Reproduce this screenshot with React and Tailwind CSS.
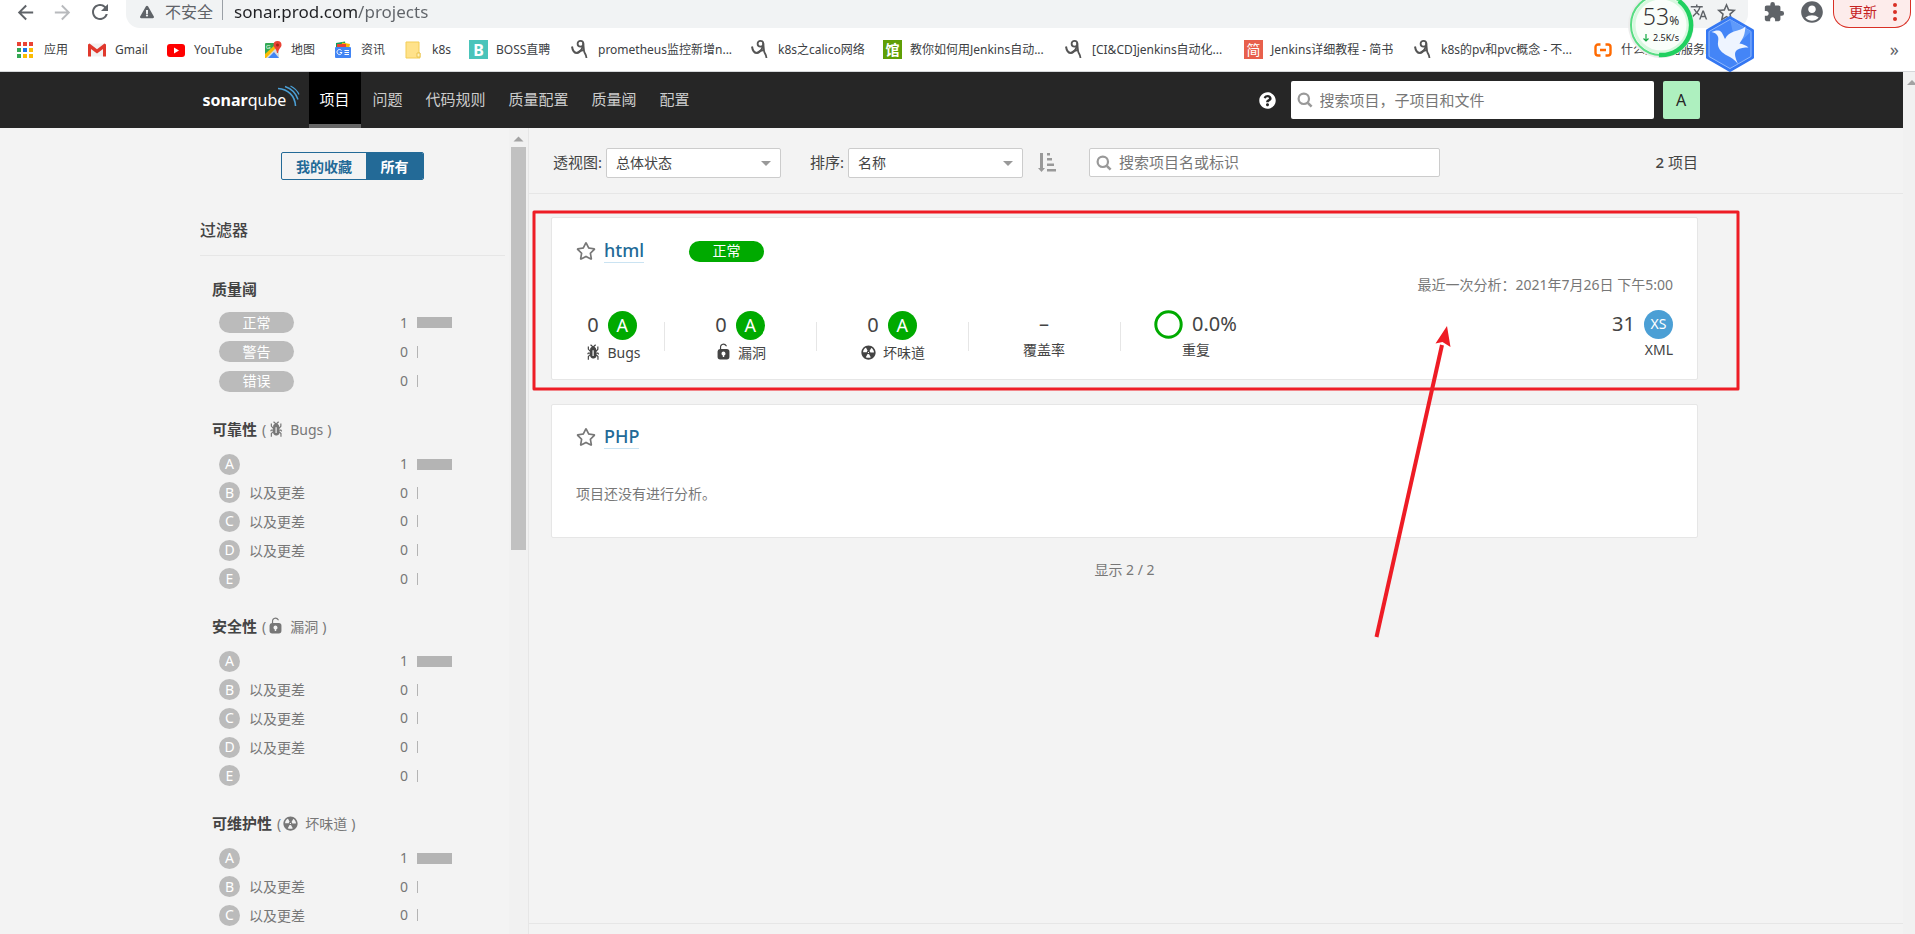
import React from "react";
import { FaRegStar, FaQuestionCircle, FaExclamationTriangle } from "react-icons/fa";
import { MdExtension, MdAccountCircle, MdRefresh, MdArrowBack, MdArrowForward, MdStarBorder, MdTranslate } from "react-icons/md";

const BUG =
  "M11 9h1.3l.5.8.8-.5-.8-1.3H11v-.3l2-2.3V3h-1v2l-1 1.2V5c-.1-.8-.7-1.5-1.4-1.9L11 1.8l-.7-.7-1.8 1.6-1.8-1.6-.7.7 1.5 1.3C6.7 3.5 6.1 4.2 6 5v1.1L5 5V3H4v2.3l2 2.3V8H4.2l-.7 1.2.8.5.4-.7H6v.3l-2 1.9V14h1v-2.4l1-1C6 12 7.1 13 8.4 13h.8c.7 0 1.4-.3 1.8-.9.3-.4.3-.9.2-1.4l.9.9V14h1v-2.8l-2-1.9V9zm-2 2H8V6h1v5z";
const LOCK =
  "M10.8 5H6V3.9a2.28 2.28 0 0 1 2-2.5 2.22 2.22 0 0 1 1.8 1.2.48.48 0 0 0 .7.2.48.48 0 0 0 .2-.7A3 3 0 0 0 8 .4a3.34 3.34 0 0 0-3 3.5v1.2a2.16 2.16 0 0 0-2 2.1v4.4a2.22 2.22 0 0 0 2.2 2.2h5.6a2.22 2.22 0 0 0 2.2-2.2V7.2A2.22 2.22 0 0 0 10.8 5zm-2.2 5.5v1.2H7.4v-1.2a1.66 1.66 0 0 1-1.1-1.6A1.75 1.75 0 0 1 8 7.2a1.71 1.71 0 0 1 .6 3.3z";
const SMELL =
  "M8 2C4.7 2 2 4.7 2 8s2.7 6 6 6 6-2.7 6-6-2.7-6-6-6zm-.5 5.5h.9v.9h-.9v-.9zm-3.8.2c-.1 0-.2-.1-.2-.2 0-.4.1-1.2.6-2S5.3 4.2 5.6 4c.2 0 .3 0 .3.1l1.3 2.3c0 .1 0 .2-.1.2-.1.2-.2.3-.3.5-.1.2-.2.4-.2.5 0 .1-.1.2-.2.2l-2.7-.1zM9.9 12c-.3.2-1.1.5-2 .5-.9 0-1.7-.3-2-.5-.1 0-.1-.2-.1-.3l1.3-2.3c0-.1.1-.1.2-.1.2.1.3.1.5.1s.4 0 .5-.1c.1 0 .2 0 .2.1l1.3 2.3c.2.2.2.3.1.3zm2.5-4.1L9.7 8c-.1 0-.2-.1-.2-.2 0-.2-.1-.4-.2-.5 0-.1-.2-.3-.3-.4-.1 0-.1-.1-.1-.2l1.3-2.3c.1-.1.2-.1.3-.1.3.2 1 .7 1.5 1.5s.6 1.6.6 2c0 0-.1.1-.2.1z";

function Glyph({ d }) {
  return (
    <svg className="size-[19px] shrink-0" viewBox="0 0 16 16" fill="currentColor" aria-hidden="true">
      <path d={d} />
    </svg>
  );
}

function SearchIcon() {
  return (
    <svg className="size-4 shrink-0 text-[#999999]" viewBox="0 0 16 16" fill="none" stroke="currentColor" aria-hidden="true">
      <circle cx="6.8" cy="6.8" r="5.2" strokeWidth="2.2" />
      <path d="M10.8 10.8L14.6 14.6" strokeWidth="2.6" />
    </svg>
  );
}

/* ---------- bookmark favicons ---------- */

function AppsIcon() {
  const colors = ["#ea4335", "#ea4335", "#ea4335", "#34a853", "#1a73e8", "#fbbc04", "#34a853", "#fbbc04", "#fbbc04"];
  return (
    <svg className="size-4" viewBox="0 0 16 16" aria-hidden="true">
      {colors.map((c, i) => (
        <rect key={i} x={(i % 3) * 6} y={Math.floor(i / 3) * 6} width="4" height="4" fill={c} />
      ))}
    </svg>
  );
}
function GmailIcon() {
  return (
    <svg className="h-4 w-[18px]" viewBox="0 0 18 16" aria-hidden="true">
      <path d="M1 1.500h16v13H1z" fill="#f2f2f2" />
      <path d="M0 14.500V2.500l1.500-1L9 7.300l7.500-5.800 1.500 1v12h-3V7L9 11.600 3 7v7.500z" fill="#e0392d" />
    </svg>
  );
}
function YoutubeIcon() {
  return (
    <svg className="h-4 w-[18px]" viewBox="0 0 18 16" aria-hidden="true">
      <rect x="0" y="2" width="18" height="13" rx="3" fill="#f00" />
      <path d="M7 5.600L12 8.500 7 11.400z" fill="#fff" />
    </svg>
  );
}
function MapsIcon() {
  return (
    <svg className="h-[18px] w-[18px]" viewBox="0 0 18 18" aria-hidden="true">
      <rect x="1" y="2" width="14" height="15" rx="1" fill="#34a853" />
      <path d="M1 17L12 5l3 3v9z" fill="#d9dde0" />
      <path d="M4 17l6-6 5 6z" fill="#4285f4" />
      <path d="M1 13l10-9 2 2L2 17H1z" fill="#fbbc04" />
      <path d="M13.500 0a4 4 0 0 1 4 4c0 2.500-3 3.800-3.500 8h-1c-.5-4.200-3.500-5.500-3.500-8a4 4 0 0 1 4-4z" fill="#ea4335" />
      <circle cx="13.500" cy="4" r="1.500" fill="#a52714" />
      <text x="2" y="8" fontSize="6" fill="#fff" fontFamily="Liberation Sans, sans-serif">G</text>
    </svg>
  );
}
function NewsIcon() {
  return (
    <svg className="h-[18px] w-[18px]" viewBox="0 0 18 18" aria-hidden="true">
      <path d="M2 2l9-1.500 1 6H2z" fill="#0f9d58" />
      <path d="M8 1.500l8 1.500-1 5H7z" fill="#fbbc04" />
      <path d="M3 3h9v4H3z" fill="#ea4335" />
      <rect x="1" y="6" width="16" height="11" rx="1" fill="#4285f4" />
      <path d="M7.500 9.500a2.500 2.500 0 1 0 .5 2H5.800M10.500 9.500h4.500M10.500 11.500h4.500M10.500 13.500h4.500" stroke="#fff" fill="none" />
    </svg>
  );
}
function FolderIcon() {
  return (
    <svg className="h-[18px] w-4" viewBox="0 0 16 18" aria-hidden="true">
      <path d="M1 1h13v11h1v5H1z" fill="#ffe28a" stroke="#f3cd57" />
      <path d="M12 12h3v4h-3z" fill="#fff2bf" stroke="#e6bd3f" strokeWidth=".8" />
    </svg>
  );
}
function BossIcon() {
  return (
    <span className="flex h-[19px] w-[19px] items-center justify-center bg-[#4ac4ba] text-[16px] leading-none font-bold text-white">B</span>
  );
}
function BlogIcon() {
  return (
    <svg className="h-[19px] w-[18px]" viewBox="0 0 18 19" fill="none" stroke="#555" aria-hidden="true">
      <path d="M1 6.500C1.500 10 3 13 6 13c2.500 0 4.500-3 6-7" strokeWidth="2" />
      <circle cx="9.500" cy="3.800" r="2.900" strokeWidth="1.800" />
      <path d="M12 2.500c1 4 .5 8 1.500 10 .8 1.500 1.700 2.500 2 5.500M13 10c-2.500 0-4.500.8-7 3" strokeWidth="1.800" />
    </svg>
  );
}
function GuanIcon() {
  return <span className="flex h-[19px] w-[19px] items-center justify-center bg-[#5f9f06] text-[14px] leading-none font-bold text-white">馆</span>;
}
function JianIcon() {
  return <span className="flex h-[19px] w-[19px] items-center justify-center bg-[#e8604c] text-[14px] leading-none text-white">简</span>;
}
function CloudIcon() {
  return (
    <svg className="h-[14px] w-[18px]" viewBox="0 0 18 14" fill="none" stroke="#ff6a00" strokeWidth="2.400" aria-hidden="true">
      <path d="M6.500 1.500H4a2.500 2.500 0 0 0-2.500 2.500v6A2.500 2.500 0 0 0 4 12.500h2.500M11.500 1.500H14A2.500 2.500 0 0 1 16.500 4v6a2.500 2.500 0 0 1-2.500 2.500h-2.500M6 7h6" />
    </svg>
  );
}

const bookmarks = [
  { icon: AppsIcon, label: "应用", w: "w-[71px]" },
  { icon: GmailIcon, label: "Gmail", w: "w-[79px]" },
  { icon: YoutubeIcon, label: "YouTube", w: "w-[97px]" },
  { icon: MapsIcon, label: "地图", w: "w-[70px]" },
  { icon: NewsIcon, label: "资讯", w: "w-[71px]" },
  { icon: FolderIcon, label: "k8s", w: "w-[64px]" },
  { icon: BossIcon, label: "BOSS直聘", w: "w-[102px]" },
  { icon: BlogIcon, label: "prometheus监控新增n...", w: "w-[180px]" },
  { icon: BlogIcon, label: "k8s之calico网络", w: "w-[132px]" },
  { icon: GuanIcon, label: "教你如何用Jenkins自动...", w: "w-[182px]" },
  { icon: BlogIcon, label: "[CI&CD]jenkins自动化...", w: "w-[179px]" },
  { icon: JianIcon, label: "Jenkins详细教程 - 简书", w: "w-[170px]" },
  { icon: BlogIcon, label: "k8s的pv和pvc概念 - 不...", w: "w-[180px]" },
  { icon: CloudIcon, label: "什么是容器服务k8s", w: "w-[130px]" },
];

function BrowserBar() {
  return (
    <div className="relative shrink-0 border-b border-[#d5d7da] bg-white">
      <div className="flex h-7 items-start overflow-hidden text-[#5f6368]">
        <div className="flex w-[126px] shrink-0 gap-[14px] pl-[14px]">
          <button aria-label="后退" className="h-6"><MdArrowBack size={23} /></button>
          <button aria-label="前进" className="h-6 text-[#b8babd]"><MdArrowForward size={23} /></button>
          <button aria-label="刷新" className="h-6"><MdRefresh size={24} /></button>
        </div>
        <div className="flex h-7 min-w-0 flex-1 items-start rounded-b-[14px] bg-[#f1f3f4] pr-[10px] pl-[14px]">
          <span className="flex h-6 shrink-0 items-center gap-[11px] text-[16px]">
            <FaExclamationTriangle size={14} />
            不安全
          </span>
          <span className="mr-[11px] ml-[9px] h-5 w-px shrink-0 bg-[#9aa0a6]" />
          <input
            aria-label="地址"
            className="h-6 min-w-0 flex-1 bg-[linear-gradient(to_right,#202124_124px,#5f6368_124px)] bg-clip-text text-[17px] text-transparent outline-none"
            defaultValue="sonar.prod.com/projects"
          />
          <button aria-label="翻译" className="flex h-6 w-8 items-center justify-center"><MdTranslate size={18} /></button>
          <button aria-label="收藏" className="flex h-6 items-center"><MdStarBorder size={23} /></button>
        </div>
        <div className="flex h-6 shrink-0 items-center gap-[14px] pr-[8px] pl-[15px]">
          <MdExtension size={22} />
          <MdAccountCircle size={26} />
        </div>
        <button className="mr-1 flex h-7 w-[78px] shrink-0 items-center justify-between rounded-b-[16px] border border-t-0 border-[#d93025] bg-[#fdeceb] pr-[13px] pb-1 pl-[15px] text-[14px] text-[#c5221f]">
          更新
          <svg className="h-5 w-1" viewBox="0 0 4 20" fill="#d93025" aria-hidden="true">
            <circle cx="2" cy="3" r="2" /><circle cx="2" cy="10" r="2" /><circle cx="2" cy="17" r="2" />
          </svg>
        </button>
      </div>
      <nav className="flex h-[43px] items-center overflow-hidden pl-[17px] text-[12px] text-[#3c4043]">
        {bookmarks.map(({ icon: Icon, label, w }) => (
          <a key={label} href="#" className={`flex shrink-0 items-center gap-[8px] whitespace-nowrap ${w}`}>
            <span className="flex w-[19px] shrink-0">
              <Icon />
            </span>
            {label}
          </a>
        ))}
        <button className="mr-4 ml-auto text-[18px] text-[#5f6368]">»</button>
      </nav>

      <div className="absolute -top-2 right-[221px] size-[66px]">
        <svg className="size-full" viewBox="0 0 66 66" aria-hidden="true">
          <circle cx="33" cy="33" r="33" fill="#ececec" />
          <circle cx="33" cy="33" r="30" fill="#fbfffb" fillOpacity=".95" stroke="#58dd83" strokeWidth="2" />
          <circle cx="33" cy="33" r="27" fill="none" stroke="#d8f8df" strokeWidth="3" />
          <path d="M51 9a30 30 0 0 1-20 54" fill="none" stroke="#20d060" strokeWidth="4.500" />
        </svg>
        <div className="absolute inset-x-0 top-[10px] flex items-baseline justify-center leading-[28px] text-[#333333]">
          <span className="text-[23px] font-light">53</span>
          <span className="text-[12px]">%</span>
        </div>
        <div className="absolute inset-x-0 top-[39px] flex items-center justify-center gap-1 text-[9px] leading-[14px] text-[#222222]">
          <svg className="h-2 w-1.5" viewBox="0 0 6 8" fill="none" stroke="#12a840" strokeWidth="1.200" aria-hidden="true">
            <path d="M3 0v7M.5 4.500L3 7l2.500-2.500" />
          </svg>
          2.5K/s
        </div>
      </div>
      <svg className="absolute top-4 right-[160px] h-14 w-[50px]" viewBox="0 0 50 56" aria-hidden="true">
        <path d="M25 1.500L47.500 14.500V41.500L25 54.500 2.500 41.500V14.500z" fill="#4485f7" stroke="#3477f2" strokeWidth="3" strokeLinejoin="round" />
        <path d="M25 3.500L46 15.500V40.500L25 52.500 4 40.500V15.500z" fill="none" stroke="#8fb8fc" />
        <path d="M25 3.500L46 15.500 31 30z" fill="#5f9afa" />
        <path d="M6.500 16C9 15 11 14.300 13.500 14.500 17 15 18 19 20 23 22 19 25 17 29 15.500 34 14 37.500 13 40.500 10.500 40 14 40 17 38.500 20.500 37.500 23 36 25 34.500 27.500 38 28 41 29.500 43.500 31.500 39 31.500 35 32 32 34 29 36.500 29.500 40 33 48 29.500 43.500 26 41.500 22 39.500 17 37 13.500 33 13 29 12.700 25 14.500 22 12 19 10.500 17 9 16.500 6.500 16z" fill="#eef4ff" />
      </svg>
    </div>
  );
}

/* ---------- application ---------- */

const menu = ["问题", "代码规则", "质量配置", "质量阈", "配置"];

function Header() {
  return (
    <header className="h-14 shrink-0 bg-[#262626]">
      <div className="mx-auto flex h-full max-w-[1500px] items-stretch pr-[2px]">
        <a href="#" aria-label="SonarQube" className="relative flex w-[107px] items-center pl-px text-[16px] text-white">
          <b>sonar</b>
          <span>qube</span>
          <svg className="absolute top-3 right-[9px] h-6 w-6" viewBox="0 0 24 24" fill="none" stroke="#4b9fd5" aria-hidden="true">
            <path d="M2 4.500C12 5 19 12 19.500 22" strokeWidth="1.600" />
            <path d="M9 2.500c6 2 11 7 13 13" strokeWidth="1.400" />
            <path d="M14.500 2c4 2 7 5 8.500 8.500" strokeWidth="1.200" />
          </svg>
        </a>
        <nav className="flex items-stretch gap-px text-[15px] text-[#cccccc]">
          <a href="#" className="flex items-center border-b-4 border-[#666666] bg-black px-[11px] pt-[2px] text-white">项目</a>
          {menu.map((m) => (
            <a key={m} href="#" className="flex items-center border-b-4 border-transparent px-[11px] pt-[2px]">{m}</a>
          ))}
        </nav>
        <div className="ml-auto flex items-center gap-[9px]">
          <button aria-label="帮助" className="mr-[6px] text-white"><FaQuestionCircle size={17} /></button>
          <label className="flex h-[38px] w-[363px] items-center gap-[7px] rounded-xs bg-white pl-[6px]">
            <SearchIcon />
            <input aria-label="搜索" className="min-w-0 flex-1 text-[15px] outline-none placeholder:text-[#777777]" placeholder="搜索项目，子项目和文件" />
          </label>
          <button className="h-[38px] w-[37px] rounded-xs bg-[#aef0bf] text-[16px] text-[#262626]">A</button>
        </div>
      </div>
    </header>
  );
}

function FacetCount({ n }) {
  return (
    <>
      <span className="ml-auto pr-[9px] leading-5">{n}</span>
      <span className="flex w-[45px]">
        {n ? <span className="h-[11px] w-[35px] bg-[#b4b4b4]" /> : <span className="h-3 w-px bg-[#b4b4b4]" />}
      </span>
    </>
  );
}

const ratings = ["A", "B", "C", "D", "E"];

function RatingFacet({ title, icon, name }) {
  return (
    <section className="mt-[21px] pl-3">
      <h3 className="flex h-6 items-center text-[14px] text-[#777777]">
        <b className="mr-[5px] text-[15px] font-semibold text-[#444444]">{title}</b>
        (<Glyph d={icon} />
        <span className="ml-[5px]">{name}</span>
        <span className="ml-1">)</span>
      </h3>
      <div className="mt-[9px] grid h-[143px] grid-rows-5">
        {ratings.map((r, i) => (
          <button key={r} className="flex items-center pl-[7px] text-left text-[14px] text-[#777777]">
            <span className="flex size-[21px] items-center justify-center rounded-full bg-[#bbbbbb] leading-none text-white">{r}</span>
            {i > 0 && i < 4 && <span className="pl-[9px]">以及更差</span>}
            <FacetCount n={i === 0 ? 1 : 0} />
            <span className="w-[43px]" />
          </button>
        ))}
      </div>
    </section>
  );
}

function Sidebar() {
  return (
    <aside className="flex w-[529px] shrink-0 overflow-hidden border-r border-[#e6e6e6]">
      <div className="min-w-0 flex-1 pr-1 pl-[200px]">
        <div className="mt-6 flex justify-center">
          <div className="flex h-7 overflow-hidden rounded-xs border border-[#236a97] text-[14px] font-bold">
            <button className="w-[84px] text-[#236a97]">我的收藏</button>
            <button className="w-[57px] bg-[#236a97] text-white">所有</button>
          </div>
        </div>
        <h2 className="mt-9 border-b border-[#e6e6e6] pb-[11px] text-[16px] leading-7 font-medium text-[#444444]">过滤器</h2>
        <section className="mt-[21px] pl-3">
          <h3 className="h-6 text-[15px] leading-6 font-semibold text-[#444444]">质量阈</h3>
          <div className="mt-[7px] grid h-[88px] grid-rows-3">
            {["正常", "警告", "错误"].map((s, i) => (
              <button key={s} className="flex items-center pl-[7px] text-[14px] text-[#777777]">
                <span className="flex h-[21px] w-[75px] items-center justify-center rounded-full bg-[#bbbbbb] leading-none text-white">{s}</span>
                <FacetCount n={i === 0 ? 1 : 0} />
                <span className="w-[43px]" />
              </button>
            ))}
          </div>
        </section>
        <RatingFacet title="可靠性" icon={BUG} name="Bugs" />
        <RatingFacet title="安全性" icon={LOCK} name="漏洞" />
        <RatingFacet title="可维护性" icon={SMELL} name="坏味道" />
      </div>
      <div className="flex w-[19px] flex-col items-center bg-[#f1f1f1]">
        <svg className="mt-1 h-[15px] w-[15px] text-[#a3a3a3]" viewBox="0 0 15 15" fill="currentColor" aria-hidden="true">
          <path d="M2.500 9.500l5-5 5 5z" />
        </svg>
        <div className="h-1/2 w-[15px] bg-[#c1c1c1]" />
      </div>
    </aside>
  );
}

function SelectBox({ id, label, value, options }) {
  return (
    <div className="flex items-center gap-1">
      <label htmlFor={id}>{label}</label>
      <div className="relative">
        <select id={id} defaultValue={value} className="h-[30px] w-[175px] appearance-none rounded-xs border border-[#cccccc] bg-white pl-[9px] text-[14px] text-[#444444]">
          {options.map((o) => <option key={o}>{o}</option>)}
        </select>
        <svg className="pointer-events-none absolute top-[13px] right-[10px] h-[5px] w-[10px]" viewBox="0 0 10 5" fill="#999999" aria-hidden="true">
          <path d="M0 0h10L5 5z" />
        </svg>
      </div>
    </div>
  );
}

function Measure({ badge, icon, name, first }) {
  return (
    <div className={first ? "w-[88px] pr-4" : "w-[152px]"}>
      <div className="flex h-8 items-center justify-center gap-[9px] text-[20px]">
        <span className="leading-7">0</span>
        <span className="flex size-[29px] items-center justify-center rounded-full bg-[#00aa00] text-[18px] leading-none text-white">{badge}</span>
      </div>
      <div className="flex h-[22px] items-center justify-center gap-[5px] text-[14px]">
        <Glyph d={icon} />
        {name}
      </div>
    </div>
  );
}

function Divider() {
  return <div className="-mr-px h-[29px] w-px bg-[#e6e6e6]" />;
}

function ProjectName({ name }) {
  return (
    <div className="flex items-center">
      <button aria-label="收藏项目" className="mr-[8px] text-[#777777]"><FaRegStar size={20} /></button>
      <a href="#" className="border-b border-[#cae3f2] text-[18px] leading-[23px] font-medium text-[#236a97]">{name}</a>
    </div>
  );
}

function Main() {
  return (
    <main className="relative flex min-w-0 flex-1 flex-col">
      <div className="h-[66px] shrink-0 border-b border-[#e6e6e6] pl-6">
        <div className="flex h-[69px] max-w-[1145px] items-center text-[15px]">
          <SelectBox id="perspective" label="透视图:" value="总体状态" options={["总体状态", "泄露"]} />
          <div className="w-[29px]" />
          <SelectBox id="sort" label="排序:" value="名称" options={["名称", "最近分析"]} />
          <button aria-label="切换排序方向" className="mr-[33px] ml-[15px]">
            <svg className="h-5 w-[18px]" viewBox="0 0 18 20" fill="#999999" aria-hidden="true">
              <path d="M2 0h3v15h2L3.500 19 0 15h2zM9 0h3v2.500H9zM9 5h5v2.500H9zM9 10.500h7V13H9zM9 16h9v2.500H9z" />
            </svg>
          </button>
          <label className="flex h-[29px] w-[351px] items-center gap-[7px] rounded-xs border border-[#cccccc] bg-white pl-[6px]">
            <SearchIcon />
            <input aria-label="搜索项目" className="min-w-0 flex-1 text-[15px] outline-none placeholder:text-[#777777]" placeholder="搜索项目名或标识" />
          </label>
          <span className="ml-auto"><span className="font-medium">2</span> 项目</span>
        </div>
      </div>

      <div className="pl-[22px]">
        <div className="max-w-[1147px] pt-[23px]">
          <article className="h-[163px] rounded-xs border border-[#e6e6e6] bg-white px-6 pt-[21px]">
            <div className="flex items-center">
              <ProjectName name="html" />
              <span className="ml-[45px] flex h-[21px] w-[75px] items-center justify-center rounded-full bg-[#00aa00] text-[14px] leading-none text-white">正常</span>
            </div>
            <p className="mt-[12px] text-right text-[14px] leading-5 text-[#777777]">最近一次分析：2021年7月26日 下午5:00</p>
            <div className="mt-[14px] flex items-start">
              <div className="flex flex-1 items-center">
                <Measure first badge="A" icon={BUG} name="Bugs" />
                <Divider />
                <Measure badge="A" icon={LOCK} name="漏洞" />
                <Divider />
                <Measure badge="A" icon={SMELL} name="坏味道" />
                <Divider />
                <div className="w-[152px] text-center">
                  <div className="h-[30px] text-[20px] leading-[30px]">–</div>
                  <div className="h-6 text-[14px] leading-[22px]">覆盖率</div>
                </div>
                <Divider />
                <div className="w-[152px]">
                  <div className="flex h-[30px] items-center justify-center gap-[9px] pr-px text-[20px]">
                    <svg className="size-[29px]" viewBox="0 0 29 29" fill="none" aria-hidden="true">
                      <circle cx="14.500" cy="14.500" r="12.700" stroke="#00aa00" strokeWidth="3" />
                    </svg>
                    0.0%
                  </div>
                  <div className="h-6 text-center text-[14px] leading-[22px]">重复</div>
                </div>
              </div>
              <div className="text-right">
                <div className="flex h-[30px] items-center gap-[9px] text-[20px]">
                  31
                  <span className="flex size-[29px] items-center justify-center rounded-full bg-[#4b9fd5] text-[14px] leading-none text-white">XS</span>
                </div>
                <div className="text-[14px] leading-[22px]">XML</div>
              </div>
            </div>
          </article>

          <article className="mt-6 h-[134px] rounded-xs border border-[#e6e6e6] bg-white px-6 pt-[20px]">
            <ProjectName name="PHP" />
            <p className="mt-[33px] text-[14px] leading-6 text-[#777777]">项目还没有进行分析。</p>
          </article>
          <p className="mt-[22px] text-center text-[14px] leading-5 text-[#777777]">显示 2 / 2</p>
        </div>
      </div>
      <footer className="mt-auto h-[11px] shrink-0 border-t border-[#e6e6e6]" />

      <svg className="pointer-events-none absolute top-[81px] left-[2px] h-[430px] w-[1212px]" viewBox="0 0 1212 430" fill="none" aria-hidden="true">
        <rect x="3" y="3" width="1204" height="177" stroke="#ee1c25" strokeWidth="3" strokeLinejoin="round" />
        <path d="M845.500 428L911 136" stroke="#ee1c25" strokeWidth="4" />
        <path d="M916 117L904.500 134.500l7-1.500 8 5z" fill="#ee1c25" />
      </svg>
    </main>
  );
}

export default function App() {
  return (
    <div className="flex h-screen flex-col overflow-hidden bg-[#f3f3f3] font-['Noto_Sans','Noto_Sans_CJK_SC',sans-serif] text-[#444444]">
      <BrowserBar />
      <div className="flex min-h-0 flex-1">
        <div className="flex min-w-0 flex-1 flex-col">
          <Header />
          <div className="flex min-h-0 flex-1">
            <Sidebar />
            <Main />
          </div>
        </div>
        <div className="w-3 shrink-0 overflow-hidden bg-[#f1f1f1]">
          <svg className="mt-1 h-[15px] w-[17px] text-[#a3a3a3]" viewBox="0 0 17 15" fill="currentColor" aria-hidden="true">
            <path d="M4 9l5-5 5 5z" />
          </svg>
        </div>
      </div>
    </div>
  );
}
